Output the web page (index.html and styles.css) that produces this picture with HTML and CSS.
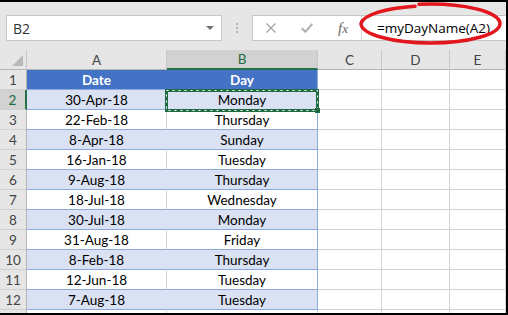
FILE: index.html
```html
<!DOCTYPE html>
<html lang="en">
<head>
  <meta charset="UTF-8">
  <title>myDayName</title>
  <link rel="stylesheet" href="styles.css">
</head>
<body>

  <div class="window">

    <!-- === Formula bar === -->
    <div class="formula-bar">
      <div class="name-box">
        <span>B2</span>
        <span class="caret"></span>
      </div>
      <div class="grip"><i></i><i></i><i></i></div>
      <div class="fx-box">
        <div class="fx-buttons">
          <svg width="10" height="10" viewBox="0 0 10 10">
            <path d="M0.5 0.5 L9.5 9.5 M9.5 0.5 L0.5 9.5" stroke="#a6a6a6" stroke-width="1.3" fill="none"/>
          </svg>
          <svg width="12" height="10" viewBox="0 0 12 10">
            <path d="M0.8 5.2 L4.4 8.8 L11.2 1" stroke="#adadad" stroke-width="2" fill="none"/>
          </svg>
          <span class="fx">f<i>x</i></span>
        </div>
        <div class="formula">=myDayName(A2)</div>
      </div>
      <!-- hand-drawn red ring round the formula -->
      <svg class="ring" width="506" height="48" viewBox="0 0 506 48">
        <path d="M419 2.3 A69.5 19.5 0 0 1 500 21.5 A69.5 19.5 0 0 1 430.5 41 A69.5 19.5 0 0 1 361 21.5 A69.5 19 0 0 1 415 4.3"
              stroke="#e2161d" stroke-width="3.5" fill="none" stroke-linecap="round"/>
      </svg>
    </div>

    <!-- === Sheet === -->
    <div class="sheet">
      <div class="row head">
        <div class="corner"><span class="tri"></span></div>
        <div>A</div>
        <div class="on">B</div>
        <div>C</div>
        <div>D</div>
        <div>E</div>
      </div>

      <div class="row table t-head">
        <div class="rh">1</div><div class="a">Date</div><div class="b">Day</div><div></div><div></div><div></div>
      </div>
      <div class="row table band">
        <div class="rh on">2</div><div class="a">30-Apr-18</div><div class="b">Monday</div><div></div><div></div><div></div>
      </div>
      <div class="row table">
        <div class="rh">3</div><div class="a">22-Feb-18</div><div class="b">Thursday</div><div></div><div></div><div></div>
      </div>
      <div class="row table band">
        <div class="rh">4</div><div class="a">8-Apr-18</div><div class="b">Sunday</div><div></div><div></div><div></div>
      </div>
      <div class="row table">
        <div class="rh">5</div><div class="a">16-Jan-18</div><div class="b">Tuesday</div><div></div><div></div><div></div>
      </div>
      <div class="row table band">
        <div class="rh">6</div><div class="a">9-Aug-18</div><div class="b">Thursday</div><div></div><div></div><div></div>
      </div>
      <div class="row table">
        <div class="rh">7</div><div class="a">18-Jul-18</div><div class="b">Wednesday</div><div></div><div></div><div></div>
      </div>
      <div class="row table band">
        <div class="rh">8</div><div class="a">30-Jul-18</div><div class="b">Monday</div><div></div><div></div><div></div>
      </div>
      <div class="row table">
        <div class="rh">9</div><div class="a">31-Aug-18</div><div class="b">Friday</div><div></div><div></div><div></div>
      </div>
      <div class="row table band">
        <div class="rh">10</div><div class="a">8-Feb-18</div><div class="b">Thursday</div><div></div><div></div><div></div>
      </div>
      <div class="row table">
        <div class="rh">11</div><div class="a">12-Jun-18</div><div class="b">Tuesday</div><div></div><div></div><div></div>
      </div>
      <div class="row table band">
        <div class="rh">12</div><div class="a">7-Aug-18</div><div class="b">Tuesday</div><div></div><div></div><div></div>
      </div>
      <!-- only a sliver of row 13 shows -->
      <div class="row">
        <div class="rh"></div><div></div><div></div><div></div><div></div><div></div>
      </div>
    </div>

    <!-- copy marquee round B2 -->
    <svg class="marquee" width="156" height="25" viewBox="0 0 156 25">
      <rect x="1.5" y="1.5" width="151" height="20" stroke="#1e6b41" stroke-width="3" fill="none"/>
      <rect x="1.5" y="1.5" width="151" height="20" stroke="#fff" stroke-width="1" stroke-dasharray="2 4" fill="none"/>
      <rect x="150" y="19" width="5" height="5" fill="#1e6b41"/>
    </svg>

  </div>

</body>
</html>
```

FILE: styles.css
```css
body {
  margin: 0;
  background: #fff;
}
/* === Window === */
.window {
  position: relative;
  width: 506px;
  height: 311px;
  overflow: hidden;
  border-top: 2px solid #000;
  border-right: 2px solid #000;
  border-bottom: 2px solid #000;
  background: #fff;
}
/* === Formula bar === */
.formula-bar {
  position: relative;
  display: flex;
  align-items: flex-start;
  height: 48px;
  box-sizing: border-box;
  padding: 13px 0 0 6px;
  background: #e6e6e6;
  font-family: "Open Sans", sans-serif;
  font-size: 14px;
}
.name-box {
  display: flex;
  align-items: center;
  width: 216px;
  height: 26px;
  box-sizing: border-box;
  padding: 0 7px 0 6px;
  border: 1px solid #c6c6c6;
  background: #fff;
  color: #333;
}
.name-box .caret {
  margin-left: auto;
  border-left: 4px solid transparent;
  border-right: 4px solid transparent;
  border-top: 4px solid #707070;
}
.grip {
  display: flex;
  flex-direction: column;
  align-items: center;
  gap: 2px;
  width: 30px;
  padding-top: 8px;
}
.grip i {
  width: 2px;
  height: 2px;
  background: #b3b3b3;
}
.fx-box {
  flex: 1;
  display: flex;
  height: 26px;
  box-sizing: border-box;
  border: 1px solid #c6c6c6;
  border-right: none;
  background: #fff;
}
.fx-buttons {
  display: flex;
  align-items: center;
  gap: 25px;
  width: 109px;
  box-sizing: border-box;
  padding-left: 13px;
  border-right: 1px solid #dadada;
}
.fx {
  font-family: "Liberation Serif", serif;
  font-style: italic;
  font-size: 15px;
  color: #666;
}
.fx i {
  font-size: 13px;
}
.formula {
  display: flex;
  align-items: center;
  padding-left: 15px;
  font-size: 13.5px;
  color: #000;
}
.ring {
  position: absolute;
  top: 0;
  left: 0;
}
/* === Sheet === */
.sheet {
  font-family: Lato, sans-serif;
  font-size: 13.5px;
  color: #000;
}
.row {
  display: grid;
  grid-template-columns: 27px 140px 151px 64px 68px 56px;
  height: 20px;
}
.row > div {
  display: flex;
  align-items: center;
  justify-content: center;
  box-sizing: border-box;
  border-right: 1px solid #d4d4d4;
  border-bottom: 1px solid #d4d4d4;
}
.head > div {
  background: #e6e6e6;
  border-right-color: #c8c8c8;
  border-bottom-color: #b5b5b5;
  color: #444;
}
.head .on {
  background: #d2d2d2;
  border-bottom: 2px solid #217346;
  color: #1d6b40;
}
.corner {
  position: relative;
}
.corner .tri {
  position: absolute;
  right: 3px;
  bottom: 3px;
  border-left: 11px solid transparent;
  border-bottom: 11px solid #b9b9b9;
}
.row > .rh {
  background: #e6e6e6;
  border-right-color: #b5b5b5;
  border-bottom-color: #d0d0d0;
  color: #444;
}
.row > .rh.on {
  background: #d2d2d2;
  border-right: 2px solid #217346;
  color: #1d6b40;
}
/* === Table (Medium 2 style) === */
.table > .a,
.table > .b {
  border-bottom-color: #8ea9db;
}
.table > .b {
  border-right-color: #8ea9db;
}
.t-head > .a,
.t-head > .b {
  background: #4472c4;
  color: #fff;
  font-weight: bold;
}
.t-head > .a {
  border-right-color: #4472c4;
}
.band > .a,
.band > .b {
  background: #d9e1f2;
}
.band > .a {
  border-right-color: #d9e1f2;
}
.marquee {
  position: absolute;
  left: 165px;
  top: 87px;
}
```
